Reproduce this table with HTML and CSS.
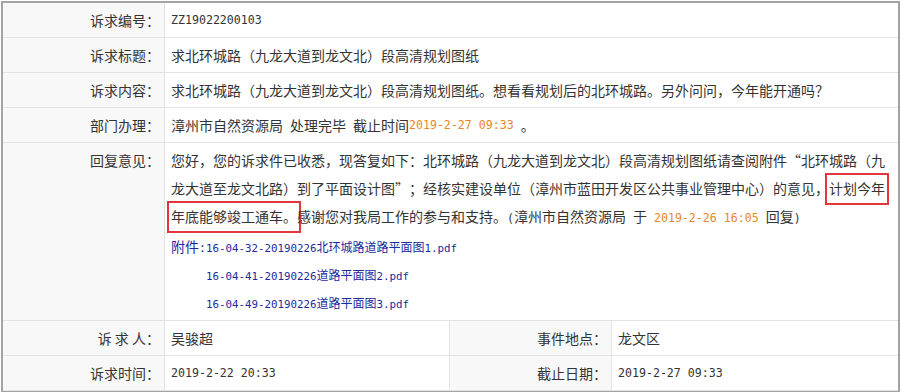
FILE: index.html
```html
<!DOCTYPE html>
<html lang="zh-CN">
<head>
<meta charset="utf-8">
<title>诉求详情</title>
<link rel="stylesheet" href="styles.css">
</head>
<body>
<div class="panel">
  <div class="grid">
    <div class="lbl">诉求编号：</div>
    <div class="val span3"><span class="num">ZZ19022200103</span></div>

    <div class="lbl">诉求标题：</div>
    <div class="val span3">求北环城路（九龙大道到龙文北）段高清规划图纸</div>

    <div class="lbl">诉求内容：</div>
    <div class="val span3">求北环城路（九龙大道到龙文北）段高清规划图纸。想看看规划后的北环城路。另外问问，今年能开通吗？</div>

    <div class="lbl">部门办理：</div>
    <div class="val span3">漳州市自然资源局<span class="num"> </span>处理完毕<span class="num"> </span>截止时间<span class="num date">2019-2-27 09:33 </span>。</div>

    <div class="lbl lbl-top">回复意见：</div>
    <div class="val span3 reply">
      <p class="reply-text">您好，您的诉求件已收悉，现答复如下：北环城路（九龙大道到龙文北）段高清规划图纸请查阅附件<span class="q q-open">“</span>北环城路（九<br>龙大道至龙文北路）到了平面设计图<span class="q">”</span>；经核实建设单位（漳州市蓝田开发区公共事业管理中心）的意见，<span class="mark">计划今年</span><br><span class="mark">年底能够竣工通车。</span>感谢您对我局工作的参与和支持。<span class="num">(</span>漳州市自然资源局<span class="num"> </span>于<span class="num"> <span class="date">2019-2-26 16:05</span> </span>回复<span class="num">)</span></p>
      <ul class="files">
        <li class="file"><span class="file-head">附件<span class="num">:</span></span><a class="file-link" href="#"><span class="fnum">16-04-32-20190226</span>北环城路道路平面图<span class="fnum">1.pdf</span></a></li>
        <li class="file file-indent"><a class="file-link" href="#"><span class="fnum">16-04-41-20190226</span>道路平面图<span class="fnum">2.pdf</span></a></li>
        <li class="file file-indent"><a class="file-link" href="#"><span class="fnum">16-04-49-20190226</span>道路平面图<span class="fnum">3.pdf</span></a></li>
      </ul>
    </div>

    <div class="lbl">诉&nbsp;求&nbsp;人：</div>
    <div class="val">吴骏超</div>
    <div class="lbl lbl-mid">事件地点：</div>
    <div class="val">龙文区</div>

    <div class="lbl">诉求时间：</div>
    <div class="val"><span class="num">2019-2-22 20:33</span></div>
    <div class="lbl lbl-mid">截止日期：</div>
    <div class="val"><span class="num">2019-2-27 09:33</span></div>
  </div>
</div>
</body>
</html>
```

FILE: styles.css
```css
* { box-sizing: border-box; }

body {
  margin: 0;
  background: #ffffff;
  font-family: "Noto Sans CJK SC", "Noto Sans", sans-serif;
  font-size: 14px;
  color: #333333;
}

.panel {
  margin: 1px 1px 0 1px;
  border: 2px solid #a3a3a3;
  border-bottom-width: 3px;
}

.grid {
  display: grid;
  grid-template-columns: 162px 284px 163px 1fr;
}

.lbl {
  display: flex;
  align-items: center;
  justify-content: flex-end;
  height: 35px;
  padding-right: 4px;
  background: #f8f8f8;
  border-right: 1px solid #e3e3e3;
  border-bottom: 1px solid #e3e3e3;
  color: #333333;
  white-space: nowrap;
}

.lbl-top {
  height: auto;
  align-items: flex-start;
  padding-top: 3px;
  line-height: 28px;
}

.lbl-mid {
  border-left: 1px solid #e3e3e3;
}

.val {
  display: flex;
  align-items: center;
  min-height: 35px;
  padding-left: 6px;
  border-bottom: 1px solid #e3e3e3;
  white-space: nowrap;
  color: #333333;
}

.span3 { grid-column: span 3; }

.num {
  font-family: "DejaVu Sans Mono", "Liberation Mono", monospace;
  font-size: 11.6px;
  white-space: pre;
}

.date { color: #e8862a; }

.reply {
  display: block;
  padding: 3px 6px 4px 6px;
  line-height: 28px;
}

.reply-text {
  margin: 0;
}

.q {
  display: inline-block;
  width: 1em;
  text-align: left;
}

.q-open { text-align: right; }

.mark {
  border: 2px solid #e2363c;
  padding: 3px 2px 5px 2px;
  margin: 0 -4px;
}

.files {
  list-style: none;
  margin: 0;
  padding: 0;
}

.file {
  height: 28px;
  line-height: 28px;
  color: #1c2a9e;
}

.file-indent { padding-left: 35px; }

.file-head { color: #1c2a9e; }

.file-link {
  color: #1c2a9e;
  text-decoration: none;
  font-size: 12px;
}

.fnum {
  font-family: "DejaVu Sans Mono", "Liberation Mono", monospace;
  font-size: 10.8px;
}
```
